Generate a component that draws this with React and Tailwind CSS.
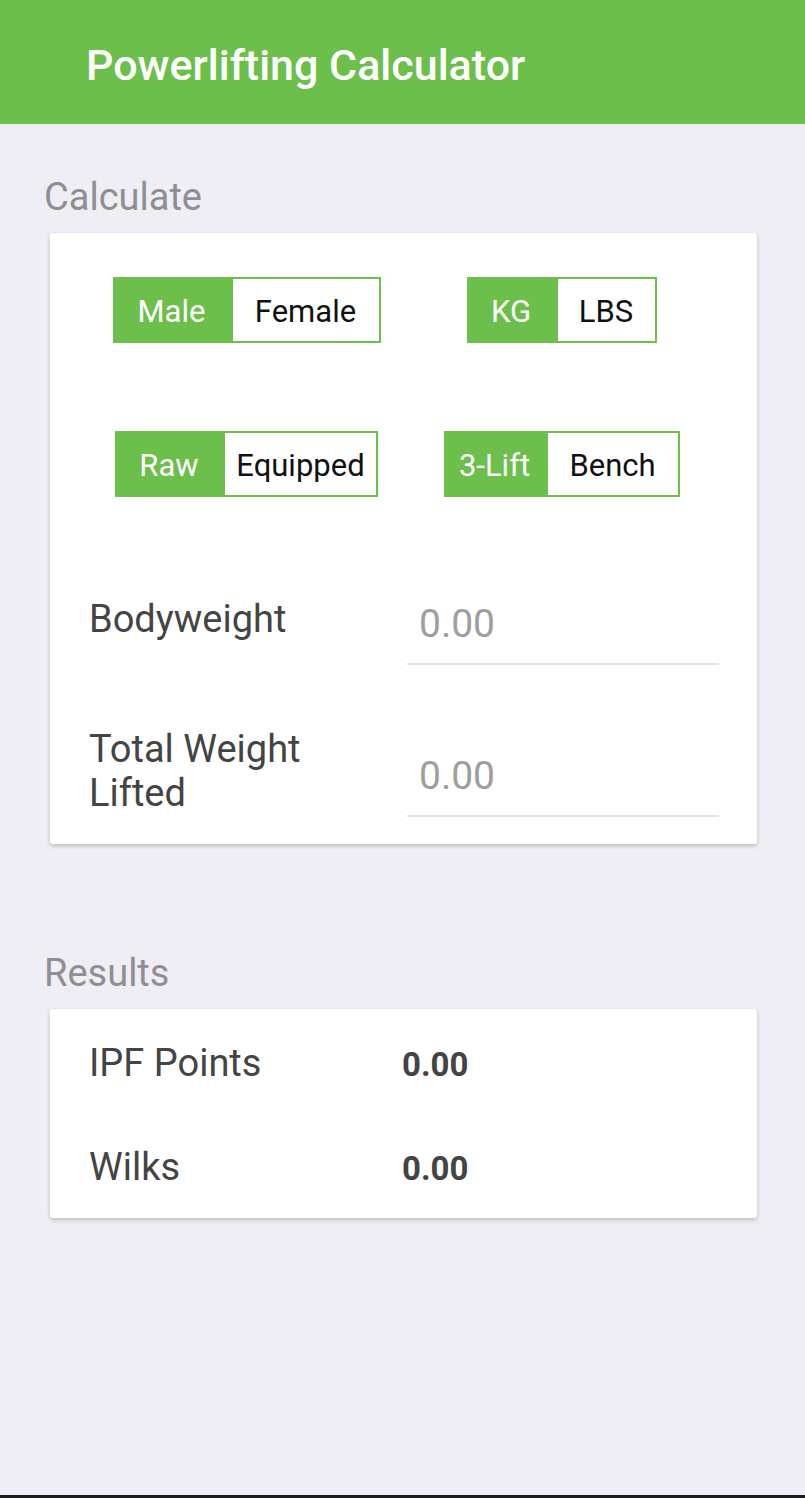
const GREEN = "bg-[#6dbf4b]";

function Toggle({ left, right, lw, rw }) {
  return (
    <div className="flex h-[66px] text-[31px] leading-[36px]">
      <div className={`${lw} ${GREEN} pt-[3px] flex items-center justify-center text-white`}>{left}</div>
      <div className={`${rw} border-2 border-[#6dbf4b] bg-white pt-[3px] flex items-center justify-center text-[#111]`}>
        {right}
      </div>
    </div>
  );
}

function Field({ label }) {
  return (
    <div className="grid grid-cols-[318px_1fr] items-center">
      <div className="text-[38px] leading-[44px] text-[#444]">{label}</div>
      <div className="mt-[30px] border-b-2 border-[#e4e4e4] pb-[17px]">
        <input
          placeholder="0.00"
          className="w-full h-[44px] pl-[12px] text-[39px] leading-[44px] text-[#444] placeholder:text-[#9e9e9e] outline-none bg-transparent"
        />
      </div>
    </div>
  );
}

function Result({ label, value }) {
  return (
    <div className="grid grid-cols-[313px_1fr] items-baseline">
      <div className="text-[38px] leading-[44px] text-[#444]">{label}</div>
      <div className="text-[33px] leading-[44px] font-bold text-[#444]">{value}</div>
    </div>
  );
}

export default function App() {
  return (
    <div className="min-h-[1498px] flex flex-col bg-[#efeef4] font-['Roboto',sans-serif]">
      <header className={`h-[124px] ${GREEN} pl-[86px] pt-[40px]`}>
        <h1 className="text-[43px] leading-[50px] font-medium text-white">Powerlifting Calculator</h1>
      </header>

      <main className="flex-1 pl-[50px] pr-[48px]">
        <div className="-ml-[6px] mt-[51px] text-[38px] leading-[44px] text-[#8e8e93]">Calculate</div>
        <section className="mt-[14px] bg-white rounded-[3px] shadow-[0_2px_4px_rgba(0,0,0,0.22)] pl-[39px] pr-[38px] pt-[44px] pb-[27px]">
          <div className="grid grid-cols-2 justify-items-center gap-y-[88px]">
            <Toggle left="Male" right="Female" lw="w-[118px]" rw="w-[150px]" />
            <Toggle left="KG" right="LBS" lw="w-[89px]" rw="w-[101px]" />
            <Toggle left="Raw" right="Equipped" lw="w-[108px]" rw="w-[155px]" />
            <Toggle left="3-Lift" right="Bench" lw="w-[102px]" rw="w-[134px]" />
          </div>
          <div className="mt-[75px] flex flex-col gap-[59px]">
            <Field label="Bodyweight" />
            <Field label={<>Total Weight<br />Lifted</>} />
          </div>
        </section>

        <div className="-ml-[6px] mt-[107px] text-[38px] leading-[44px] text-[#8e8e93]">Results</div>
        <section className="mt-[14px] bg-white rounded-[3px] shadow-[0_2px_4px_rgba(0,0,0,0.22)] pl-[39px] pr-[38px] pt-[32px] pb-[27px] flex flex-col gap-[58px]">
          <Result label="IPF Points" value="0.00" />
          <Result label="Wilks" value="0.00" />
        </section>
      </main>

      <div className="h-[3px] bg-[#1c1c1c]" />
    </div>
  );
}
